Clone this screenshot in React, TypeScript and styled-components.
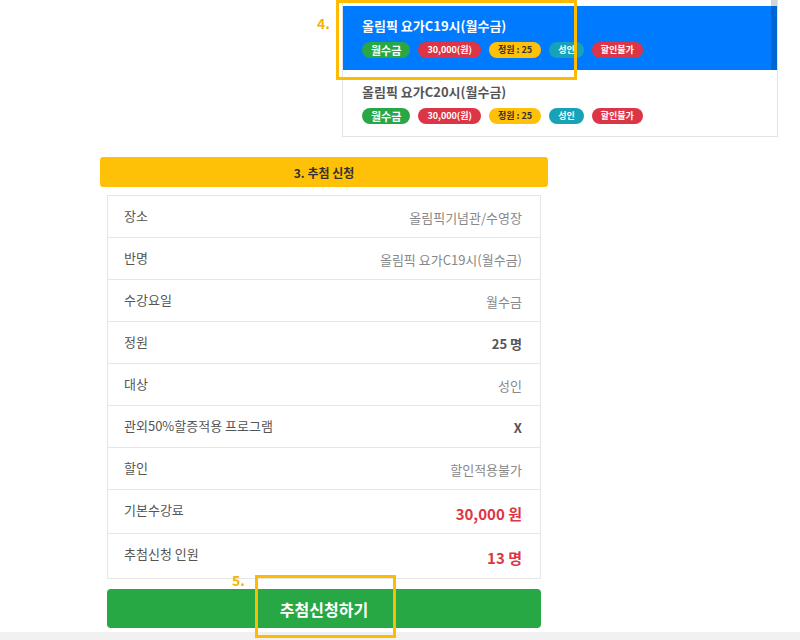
import styled, { createGlobalStyle } from "styled-components";

const GlobalStyle = createGlobalStyle`
  * { box-sizing: border-box; }
  html, body { margin: 0; padding: 0; background: #fff; }
  body {
    font-family: "Noto Sans CJK KR", "Noto Sans", sans-serif;
    color: #555;
  }
`;

type Tone = "green" | "red" | "yellow" | "teal";

const toneColors: Record<Tone, { bg: string; fg: string }> = {
  green: { bg: "#28a745", fg: "#fff" },
  red: { bg: "#dc3545", fg: "#fff" },
  yellow: { bg: "#ffc107", fg: "#333" },
  teal: { bg: "#17a2b8", fg: "#fff" },
};

const classes = [
  { title: "올림픽 요가C19시(월수금)", active: true },
  { title: "올림픽 요가C20시(월수금)", active: false },
];

const badges: { text: string; tone: Tone; big?: boolean }[] = [
  { text: "월수금", tone: "green", big: true },
  { text: "30,000(원)", tone: "red" },
  { text: "정원 : 25", tone: "yellow" },
  { text: "성인", tone: "teal" },
  { text: "할인불가", tone: "red" },
];

type Kind = "plain" | "strong" | "price";

const details: { label: string; value: string; kind: Kind }[] = [
  { label: "장소", value: "올림픽기념관/수영장", kind: "plain" },
  { label: "반명", value: "올림픽 요가C19시(월수금)", kind: "plain" },
  { label: "수강요일", value: "월수금", kind: "plain" },
  { label: "정원", value: "25 명", kind: "strong" },
  { label: "대상", value: "성인", kind: "plain" },
  { label: "관외50%할증적용 프로그램", value: "X", kind: "strong" },
  { label: "할인", value: "할인적용불가", kind: "plain" },
  { label: "기본수강료", value: "30,000 원", kind: "price" },
  { label: "추첨신청 인원", value: "13 명", kind: "price" },
];

export default function App() {
  return (
    <Page>
      <GlobalStyle />
      <ClassList>
        <ScrollThumb />
        {classes.map((c) => (
          <ClassItem key={c.title} $active={c.active}>
            {c.active && (
              <>
                <StepMark $left={-26} $top={10}>4.</StepMark>
                <Highlight $left={-7} $top={-6} $w={241} $h={80} />
              </>
            )}
            <ClassTitle>{c.title}</ClassTitle>
            <BadgeRow>
              {badges.map((b) => (
                <Badge key={b.text} $tone={b.tone} $big={b.big}>
                  {b.text}
                </Badge>
              ))}
            </BadgeRow>
          </ClassItem>
        ))}
      </ClassList>

      <ApplySection>
        <SectionTitle>3. 추첨 신청</SectionTitle>
        <InfoCard>
          {details.map((d) => (
            <InfoRow key={d.label} $big={d.kind === "price"}>
              <Label>{d.label}</Label>
              <Value $kind={d.kind}>{d.value}</Value>
            </InfoRow>
          ))}
        </InfoCard>
        <ApplyButton type="button">
          <StepMark $left={125} $top={-16}>5.</StepMark>
          <Highlight $left={148} $top={-14} $w={141} $h={63} />
          추첨신청하기
        </ApplyButton>
      </ApplySection>

      <BottomStrip />
    </Page>
  );
}

const Page = styled.div`
  display: flex;
  flex-direction: column;
  height: 640px;
  overflow: hidden;
`;

const ClassList = styled.div`
  position: relative;
  margin-left: 342px;
  width: 436px;
  padding-top: 6px;
  border: 1px solid #e3e3e3;
  border-top: none;
  background: #fff;
`;

const ScrollThumb = styled.div`
  position: absolute;
  top: 0;
  right: 0;
  width: 6px;
  height: 70px;
  background: rgba(0, 0, 0, 0.17);
  z-index: 2;
`;

const ClassItem = styled.div<{ $active?: boolean }>`
  position: relative;
  padding: ${(p) => (p.$active ? "12px 19px" : "14px 19px 12px")};
  background: ${(p) => (p.$active ? "#007bff" : "#fff")};
  color: ${(p) => (p.$active ? "#fff" : "#555")};
`;

const ClassTitle = styled.div`
  font-size: 13px;
  font-weight: 700;
  line-height: 16px;
`;

const BadgeRow = styled.div`
  display: flex;
  gap: 8px;
  margin-top: 8px;
`;

const Badge = styled.span<{ $tone: Tone; $big?: boolean }>`
  display: inline-block;
  height: 16px;
  line-height: 16px;
  padding: 0 9px;
  border-radius: 8px;
  font-size: ${(p) => (p.$big ? "11px" : "9px")};
  font-weight: 700;
  background: ${(p) => toneColors[p.$tone].bg};
  color: ${(p) => toneColors[p.$tone].fg};
  white-space: nowrap;
`;

const Highlight = styled.div<{ $left: number; $top: number; $w: number; $h: number }>`
  position: absolute;
  left: ${(p) => p.$left}px;
  top: ${(p) => p.$top}px;
  width: ${(p) => p.$w}px;
  height: ${(p) => p.$h}px;
  border: 3px solid #ffbb00;
  pointer-events: none;
  z-index: 3;
`;

const StepMark = styled.span<{ $left: number; $top: number }>`
  position: absolute;
  left: ${(p) => p.$left}px;
  top: ${(p) => p.$top}px;
  font-size: 14px;
  font-weight: 700;
  line-height: 14px;
  color: #f5b400;
`;

const ApplySection = styled.section`
  display: flex;
  flex-direction: column;
  margin: 20px 0 0 100px;
  width: 448px;
`;

const SectionTitle = styled.div`
  display: flex;
  align-items: center;
  justify-content: center;
  height: 30px;
  border-radius: 3px;
  background: #ffc107;
  color: #333;
  font-size: 12px;
  font-weight: 700;
`;

const InfoCard = styled.div`
  margin: 8px 7px 0;
  border: 1px solid #e6e6e6;
  background: #fff;
`;

const InfoRow = styled.div<{ $big?: boolean }>`
  display: flex;
  justify-content: space-between;
  min-height: ${(p) => (p.$big ? 44 : 42)}px;
  padding: 0 18px 0 16px;
  border-bottom: 1px solid #e6e6e6;

  &:last-child {
    border-bottom: none;
  }
`;

const Label = styled.div`
  align-self: flex-start;
  padding-top: 12px;
  font-size: 13px;
  line-height: 16px;
  color: #555;
`;

const Value = styled.div<{ $kind: Kind }>`
  align-self: center;
  margin-top: ${(p) => (p.$kind === "price" ? 4 : 2)}px;
  font-size: ${(p) => (p.$kind === "price" ? 15 : 13)}px;
  font-weight: ${(p) => (p.$kind === "plain" ? 400 : 700)};
  line-height: 18px;
  color: ${(p) =>
    p.$kind === "price" ? "#dc3545" : p.$kind === "strong" ? "#555" : "#888"};
`;

const ApplyButton = styled.button`
  position: relative;
  margin: 10px 7px 0;
  height: 39px;
  border: none;
  border-radius: 4px;
  background: #28a745;
  color: #fff;
  font-family: inherit;
  font-size: 16px;
  font-weight: 700;
  cursor: pointer;
`;

const BottomStrip = styled.div`
  margin-top: auto;
  height: 8px;
  background: #f1f1f1;
`;
